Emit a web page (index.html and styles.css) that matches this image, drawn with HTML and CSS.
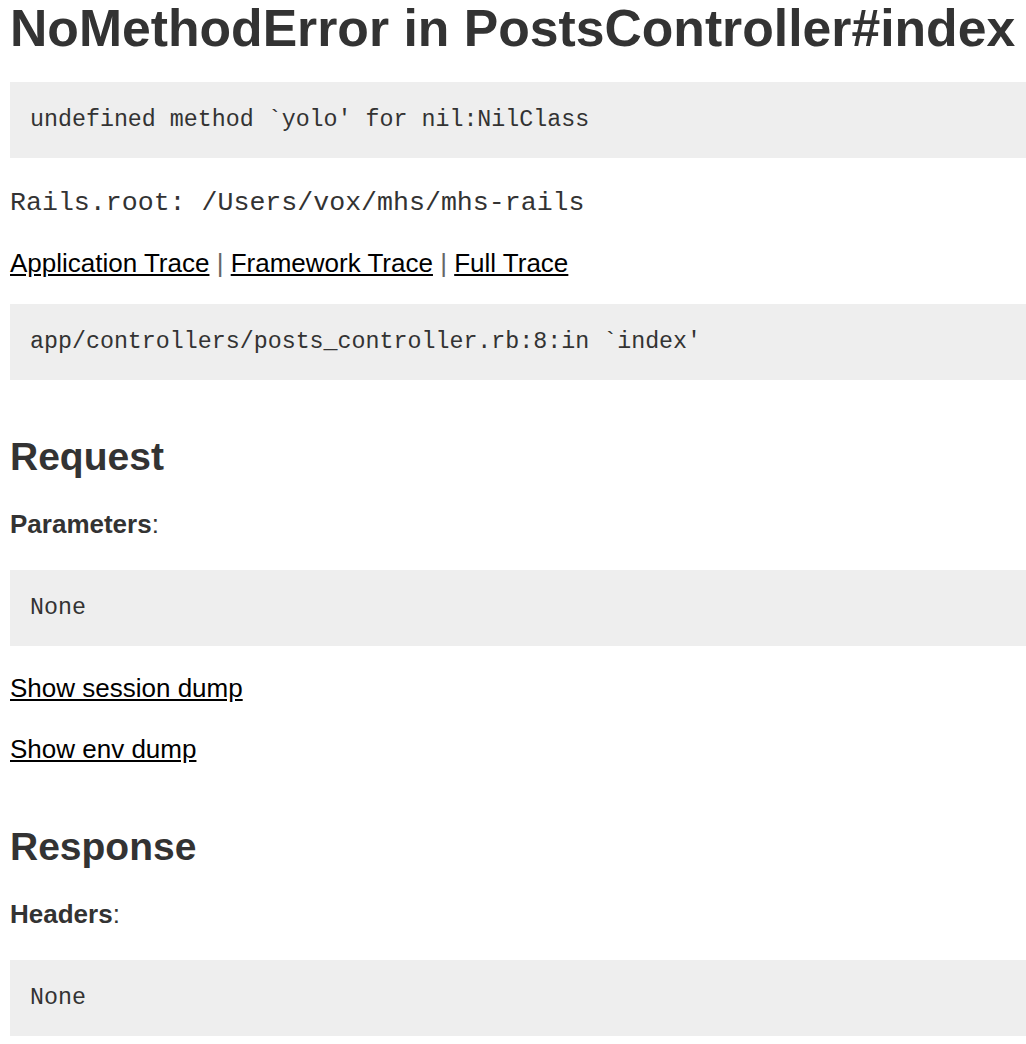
FILE: index.html
```html
<!DOCTYPE html>
<html lang="en">
<head>
<meta charset="utf-8">
<title>Action Controller: Exception caught</title>
<link rel="stylesheet" href="styles.css">
</head>
<body>
<h1 class="title">NoMethodError in PostsController#index</h1>
<pre class="box box-first">undefined method `yolo' for nil:NilClass</pre>
<p class="root"><code>Rails.root: /Users/vox/mhs/mhs-rails</code></p>
<div class="traces">
  <div class="trace-links"><a href="#">Application Trace</a> <span class="sep">|</span> <a href="#">Framework Trace</a> <span class="sep">|</span> <a href="#">Full Trace</a></div>
  <pre class="box box-trace"><code>app/controllers/posts_controller.rb:8:in `index'</code></pre>
</div>
<h2 class="section section-request">Request</h2>
<p class="label"><b>Parameters</b>:</p>
<pre class="box box-after-label">None</pre>
<p class="dump dump-first"><a href="#">Show session dump</a></p>
<p class="dump"><a href="#">Show env dump</a></p>
<h2 class="section section-response">Response</h2>
<p class="label"><b>Headers</b>:</p>
<pre class="box box-after-label">None</pre>
</body>
</html>
```

FILE: styles.css
```css
html, body {
  background: #fff;
}
body {
  margin: 0;
  padding: 0 0 0 10px;
  color: #333;
  font-family: "Liberation Sans", Arial, Helvetica, sans-serif;
  font-size: 26px;
  line-height: 36px;
}
a {
  color: #000;
  text-decoration: underline;
}
.title {
  margin: 0;
  font-size: 51.7px;
  line-height: 56px;
  font-weight: bold;
  white-space: nowrap;
}
.box {
  background: #eee;
  padding: 20px;
  margin: 0;
  font-family: "Liberation Mono", "Courier New", monospace;
  font-size: 23.3px;
  line-height: 36px;
  color: #333;
  white-space: pre-wrap;
}
.box code {
  font-family: inherit;
  font-size: inherit;
}
.box-first {
  margin-top: 26px;
}
.root {
  margin: 27px 0 24px;
  font-family: "Liberation Mono", "Courier New", monospace;
  font-size: 26.6px;
  line-height: 36px;
}
.root code {
  font-family: inherit;
  font-size: inherit;
}
.trace-links {
  line-height: 36px;
}
.sep {
  color: #666;
}
.box-trace {
  margin-top: 23px;
}
.section {
  margin: 0;
  font-size: 39px;
  line-height: 44px;
  font-weight: bold;
}
.section-request {
  margin-top: 55px;
}
.section-response {
  margin-top: 58px;
}
.label {
  margin: 27px 0 0;
}
.box-after-label {
  margin-top: 28px;
}
.dump {
  margin: 25px 0 0;
}
.dump-first {
  margin-top: 24px;
}
```
